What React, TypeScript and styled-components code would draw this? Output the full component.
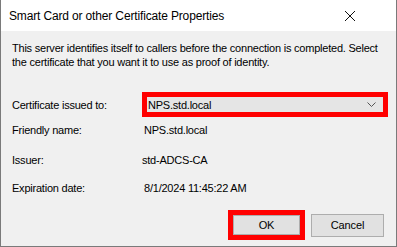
import React from "react";
import styled, { createGlobalStyle } from "styled-components";

// Page reset
const GlobalStyle = createGlobalStyle`
  html, body {
    margin: 0;
    padding: 0;
    background: #3a3a3a;
  }
  * {
    box-sizing: border-box;
  }
`;

const Window = styled.div`
  width: 397px;
  height: 247px;
  display: flex;
  flex-direction: column;
  background: #f0f0f0;
  border: 1px solid #7a7a7a;
  border-top: none;
  font-family: "Liberation Sans", Arial, sans-serif;
  color: #000;
`;

const TitleBar = styled.div`
  height: 31px;
  flex: none;
  display: flex;
  align-items: center;
  justify-content: space-between;
  background: #fff;
  padding: 0 41px 0 8px;
`;

const Title = styled.span`
  font-size: 12px;
  letter-spacing: -0.15px;
  margin-top: 1px;
`;

const Body = styled.div`
  flex: 1;
  display: flex;
  flex-direction: column;
  padding: 10px 4px 0 11px;
  letter-spacing: -0.22px;
`;

const Description = styled.p`
  margin: 0 0 23px 0;
  font-size: 11px;
  line-height: 14px;
`;

const Row = styled.div<{ $h: number }>`
  height: ${({ $h }) => $h}px;
  display: grid;
  grid-template-columns: 130px 1fr;
  align-items: center;
  font-size: 11px;
  margin-right: 8px;
`;

const Label = styled.span``;

const Value = styled.span<{ $shift?: number }>`
  padding-left: ${({ $shift }) => $shift ?? 2}px;
`;

const Combo = styled.div`
  width: 246px;
  height: 25px;
  border: 5px solid #ff0000;
  background: #e5e5e5;
  display: flex;
  align-items: center;
  justify-content: space-between;
  padding: 0 7px 0 1px;
  font-size: 11px;
`;

const Buttons = styled.div`
  display: flex;
  justify-content: flex-end;
  align-items: center;
  gap: 6px;
  margin-top: 11px;
  padding-right: 8px;
`;

const Highlight = styled.div`
  border: 5px solid #ff0000;
  width: 77px;
  height: 30px;
  display: flex;
`;

const Button = styled.button<{ $w?: number }>`
  width: ${({ $w }) => ($w ? `${$w}px` : "100%")};
  height: ${({ $w }) => ($w ? "23px" : "100%")};
  background: #e1e1e1;
  border: 1px solid #adadad;
  font-family: "Liberation Sans", Arial, sans-serif;
  font-size: 11px;
  letter-spacing: -0.1px;
  color: #000;
  padding: 0;
`;

const Chevron = () => (
  <svg width="9" height="5" viewBox="0 0 9 5">
    <path d="M0.5 0.5 L4.5 4.5 L8.5 0.5" fill="none" stroke="#555" strokeWidth="1" />
  </svg>
);

const CloseIcon = () => (
  <svg width="10" height="10" viewBox="0 0 10 10">
    <path d="M0 0 L10 10 M10 0 L0 10" stroke="#111" strokeWidth="1" />
  </svg>
);

const App = () => {
  return (
    <>
      <GlobalStyle />
      <Window>
        <TitleBar>
          <Title>Smart Card or other Certificate Properties</Title>
          <CloseIcon />
        </TitleBar>
        <Body>
          <Description>
            This server identifies itself to callers before the connection is completed. Select
            the certificate that you want it to use as proof of identity.
          </Description>
          <Row $h={25}>
            <Label>Certificate issued to:</Label>
            <Combo>
              <span>NPS.std.local</span>
              <Chevron />
            </Combo>
          </Row>
          <Row $h={26}>
            <Label>Friendly name:</Label>
            <Value>NPS.std.local</Value>
          </Row>
          <Row $h={34}>
            <Label>Issuer:</Label>
            <Value $shift={0}>std-ADCS-CA</Value>
          </Row>
          <Row $h={22}>
            <Label>Expiration date:</Label>
            <Value>8/1/2024 11:45:22 AM</Value>
          </Row>
          <Buttons>
            <Highlight>
              <Button>OK</Button>
            </Highlight>
            <Button $w={73}>Cancel</Button>
          </Buttons>
        </Body>
      </Window>
    </>
  );
};

export default App;
